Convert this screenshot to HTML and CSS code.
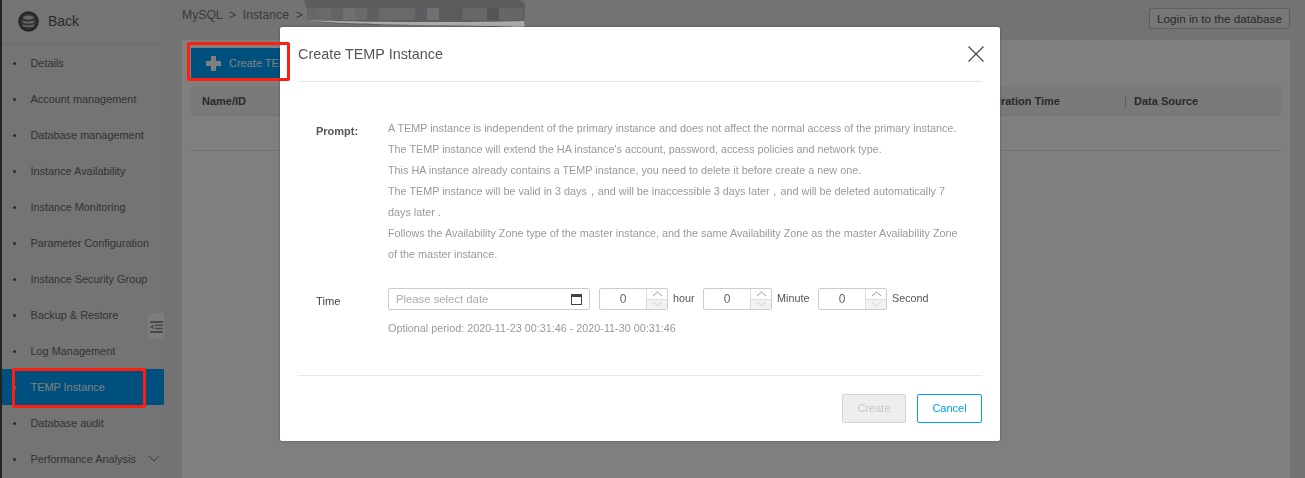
FILE: index.html
```html
<!DOCTYPE html>
<html lang="en">
<head>
<meta charset="utf-8">
<title>Create TEMP Instance</title>
<link rel="stylesheet" href="styles.css">
</head>
<body>
<div class="app">
  <aside class="sidebar">
    <div class="back">
      <svg class="back-icon" width="21" height="21" viewBox="0 0 21 21"><circle cx="10.500" cy="10.500" r="9.300" fill="#666" stroke="#4a4a4a" stroke-width="2"/><ellipse cx="10.500" cy="6.600" rx="5.500" ry="2" fill="#ccc"/><path d="M5 9.600c1 1.500 10 1.500 11 0v1.800c-1 1.500-10 1.500-11 0zM5 13.200c1 1.500 10 1.500 11 0V15c-1 1.500-10 1.500-11 0z" fill="#ccc"/></svg>
      <span>Back</span>
    </div>
    <ul class="menu">
      <li class="item">Details</li>
      <li class="item">Account management</li>
      <li class="item">Database management</li>
      <li class="item">Instance Availability</li>
      <li class="item">Instance Monitoring</li>
      <li class="item">Parameter Configuration</li>
      <li class="item">Instance Security Group</li>
      <li class="item">Backup &amp; Restore</li>
      <li class="item">Log Management</li>
      <li class="item active">TEMP Instance</li>
      <li class="item">Database audit</li>
      <li class="item">Performance Analysis
        <svg class="chev" width="12" height="7" viewBox="0 0 12 7"><path d="M1 1l5 5 5-5" fill="none" stroke="#777" stroke-width="1"/></svg>
      </li>
    </ul>
    <div class="collapse">
      <svg width="13" height="12" viewBox="0 0 13 12"><path d="M0 0h13v2H0zM5 3.500h8v1.500H5zM5 6.800h8v1.500H5zM0 10h13v2H0z M3.500 3.500v4.800L0 5.900z" fill="#909090"/></svg>
    </div>
  </aside>
  <main class="main">
    <header class="topbar">
      <div class="crumbs">MySQL &nbsp;&gt;&nbsp; Instance &nbsp;&gt;</div>
      <button class="login">Login in to the database</button>
    </header>
    <section class="panel">
      <button class="create-main">
        <svg width="15" height="15" viewBox="0 0 15 15"><path d="M5 0h5v5h5v5h-5v5H5v-5H0V5h5z" fill="#fff"/></svg>
        <span>Create TEMP Instance</span>
      </button>
      <div class="thead">
        <span class="th name">Name/ID</span>
        <span class="th exp">Expiration Time</span>
        <span class="th src">Data Source</span>
      </div>
      <div class="empty-row"></div>
    </section>
  </main>
</div>

<div class="overlay"></div>

<svg class="scribble" width="224" height="28" viewBox="0 0 224 28">
  <path d="M2 0h216c4 2 6 4 5 7l-1 14c2 2 1 5-3 6-30 1-60-2-90-2-40 0-90 1-115-4C10 18 4 8 2 0z" fill="#5d5d5d"/>
  <path d="M6 20c40 2 150 3 216 1l1 5c-4 2-6 1-10 1-30-2-170-1-207-7z" fill="#aaa"/>
  <g>
    <rect x="5" y="8" width="12" height="12" fill="#666"/><rect x="17" y="8" width="12" height="12" fill="#6a6a6a"/>
    <rect x="29" y="8" width="12" height="12" fill="#646464"/><rect x="41" y="8" width="12" height="12" fill="#6f7070"/>
    <rect x="53" y="8" width="12" height="12" fill="#6a6a6a"/><rect x="65" y="8" width="12" height="12" fill="#5f5f5f"/>
    <rect x="77" y="8" width="36" height="12" fill="#696969"/><rect x="113" y="8" width="12" height="12" fill="#5b5d60"/>
    <rect x="125" y="8" width="12" height="12" fill="#6f7170"/><rect x="137" y="8" width="24" height="12" fill="#5c5a5a"/>
    <rect x="161" y="8" width="24" height="12" fill="#686868"/><rect x="185" y="8" width="12" height="12" fill="#555"/>
    <rect x="197" y="8" width="24" height="12" fill="#666"/>
  </g>
</svg>

<div class="modal" role="dialog">
  <div class="modal-head">
    <h2 class="modal-title">Create TEMP Instance</h2>
    <svg class="close" width="16" height="16" viewBox="0 0 16 16"><path d="M0.500 0.500l15 15M15.500 0.500l-15 15" fill="none" stroke="#444" stroke-width="1.100"/></svg>
  </div>
  <div class="modal-body">
    <div class="prompt">
      <div class="prompt-label">Prompt:</div>
      <div class="prompt-text">
        <p>A TEMP instance is independent of the primary instance and does not affect the normal access of the primary instance.</p>
        <p>The TEMP instance will extend the HA instance's account, password, access policies and network type.</p>
        <p>This HA instance already contains a TEMP instance, you need to delete it before create a new one.</p>
        <p>The TEMP instance will be valid in 3 days，and will be inaccessible 3 days later，and will be deleted automatically 7 days later .</p>
        <p>Follows the Availability Zone type of the master instance, and the same Availability Zone as the master Availability Zone of the master instance.</p>
      </div>
    </div>
    <div class="time-row">
      <div class="time-label">Time</div>
      <div class="time-fields">
        <div class="date-input">
          <span>Please select date</span>
          <svg width="11" height="11" viewBox="0 0 11 11"><rect x="0.500" y="0.500" width="10" height="10" fill="none" stroke="#444"/><rect x="0" y="0" width="11" height="3" fill="#444"/></svg>
        </div>
        <div class="spin"><span class="spin-val">0</span><span class="spin-btns"><span class="up"><svg width="11" height="6" viewBox="0 0 11 6"><path d="M1 5l4.500-4 4.500 4" fill="none" stroke="#999"/></svg></span><span class="down"><svg width="11" height="6" viewBox="0 0 11 6"><path d="M1 1l4.500 4 4.500-4" fill="none" stroke="#ccc"/></svg></span></span></div>
        <span class="unit unit-hour">hour</span>
        <div class="spin"><span class="spin-val">0</span><span class="spin-btns"><span class="up"><svg width="11" height="6" viewBox="0 0 11 6"><path d="M1 5l4.500-4 4.500 4" fill="none" stroke="#999"/></svg></span><span class="down"><svg width="11" height="6" viewBox="0 0 11 6"><path d="M1 1l4.500 4 4.500-4" fill="none" stroke="#ccc"/></svg></span></span></div>
        <span class="unit unit-minute">Minute</span>
        <div class="spin"><span class="spin-val">0</span><span class="spin-btns"><span class="up"><svg width="11" height="6" viewBox="0 0 11 6"><path d="M1 5l4.500-4 4.500 4" fill="none" stroke="#999"/></svg></span><span class="down"><svg width="11" height="6" viewBox="0 0 11 6"><path d="M1 1l4.500 4 4.500-4" fill="none" stroke="#ccc"/></svg></span></span></div>
        <span class="unit">Second</span>
      </div>
    </div>
    <div class="period">Optional period: 2020-11-23 00:31:46 - 2020-11-30 00:31:46</div>
  </div>
  <div class="modal-foot">
    <button class="btn btn-disabled">Create</button>
    <button class="btn btn-cancel">Cancel</button>
  </div>
</div>

<div class="mark mark-create"></div>
<div class="mark mark-temp"></div>
</body>
</html>
```
FILE: styles.css
```css
* { box-sizing: border-box; }
html, body { margin: 0; padding: 0; height: 100%; overflow: hidden; }
body { font-family: "Liberation Sans", Arial, sans-serif; font-size: 12px; color: #333; background: #e6e6e6; }
p, h2, ul { margin: 0; padding: 0; }
button { font-family: inherit; cursor: pointer; }

.app { display: flex; width: 1305px; height: 478px; }
.sidebar { position: relative; width: 164px; flex: none; background: #e9e9e9; border-left: 2px solid #444; }
.back { height: 45px; display: flex; align-items: center; gap: 9px; padding: 0 0 2px 16px; font-size: 14px; color: #555; border-bottom: 1px solid #d8d8d8; }
.menu { list-style: none; }
.item { position: relative; height: 36px; line-height: 36px; padding-left: 28.500px; font-size: 10.900px; color: #666; }
.item::before { content: ""; position: absolute; left: 11px; top: 17px; width: 3px; height: 3px; border-radius: 50%; background: #555; }
.item.active { background: #00a0fa; color: #fff; }
.item.active::before { background: #fff; }
.chev { position: absolute; right: 4px; top: 14px; }
.collapse { position: absolute; right: 0; top: 313px; width: 16px; height: 27px; background: #fafafa; display: flex; align-items: center; justify-content: center; clip-path: polygon(0 6%, 100% 0, 100% 100%, 0 90%); }

.main { flex: 1; background: #e6e6e6; display: flex; flex-direction: column; padding: 0 15px 0 18px; }
.topbar { height: 40px; display: flex; justify-content: space-between; align-items: flex-start; flex: none; }
.crumbs { font-size: 12.200px; line-height: 31px; color: #777; }
.login { height: 21px; margin-top: 8px; width: 141px; padding: 0; font-size: 11.700px; color: #555; background: #eee; border: 1px solid #bcbcbc; border-radius: 1px; }
.panel { flex: 1; background: #fff; padding: 8px 9px 0; }
.create-main { height: 30px; width: 200px; display: flex; align-items: center; gap: 8px; padding: 0 0 0 15px; border: 0; background: #00a0fa; color: #fff; font-size: 11px; }
.thead { position: relative; margin-top: 9px; height: 29px; background: #f3f3f3; border-bottom: 1px solid #e6e6e6; font-weight: bold; font-size: 11px; display: flex; align-items: center; }
.th { color: #555; }
.name { padding-left: 11px; }
.exp { margin-left: auto; }
.src { width: 156px; margin-left: 65px; padding-left: 8px; border-left: 1px solid #bbb; line-height: 12px; }
.empty-row { height: 35px; border-bottom: 1px solid #e0e0e0; }

.overlay { position: fixed; inset: 0; background: rgba(0, 0, 0, .5); }
.scribble { position: absolute; left: 302px; top: 0; }

.modal { position: absolute; left: 280px; top: 27px; width: 720px; height: 414px; background: #fff; border-radius: 2px; padding: 0 18px; display: flex; flex-direction: column; box-shadow: 0 0 3px rgba(0,0,0,.3); }
.modal-head { height: 55px; flex: none; display: flex; align-items: center; justify-content: space-between; border-bottom: 1px solid #e8e8e8; }
.modal-title { font-size: 14.400px; font-weight: normal; color: #555; }
.close { margin-right: -2px; }
.modal-body { flex: 1; padding-top: 36px; }
.prompt { display: flex; }
.prompt-label { width: 90px; padding-left: 18px; font-weight: bold; font-size: 11px; color: #555; line-height: 27px; flex: none; }
.prompt-text { width: 573px; font-size: 10.800px; line-height: 21px; color: #999; }
.time-row { display: flex; margin-top: 23px; }
.time-label { width: 90px; padding-left: 18px; font-size: 11.200px; color: #444; line-height: 27px; flex: none; }
.time-fields { display: flex; align-items: center; height: 22px; }
.date-input { width: 202px; height: 22px; border: 1px solid #ccc; border-radius: 2px; display: flex; align-items: center; justify-content: space-between; padding: 0 7px; color: #aaa; font-size: 11.300px; margin-right: 9px; }
.spin { width: 69px; height: 22px; border: 1px solid #ccc; border-radius: 2px; display: flex; }
.spin-val { flex: 1; text-align: center; line-height: 21px; color: #666; font-size: 12px; }
.spin-btns { width: 21px; display: flex; flex-direction: column; border-left: 1px solid #ddd; }
.spin-btns span { flex: 1; display: flex; align-items: center; justify-content: center; }
.down { background: #f2f2f2; border-top: 1px solid #ddd; }
.unit { font-size: 10.800px; color: #555; margin: 0 0 3px 5px; }
.unit-hour { width: 30px; }
.unit-minute { width: 41px; }
.period { margin-top: 5px; padding-left: 90px; font-size: 10.800px; line-height: 16px; color: #999; }
.modal-foot { height: 66px; flex: none; border-top: 1px solid #e8e8e8; display: flex; justify-content: flex-end; align-items: flex-start; gap: 11px; padding-top: 18px; }
.btn { height: 29px; padding: 0 0 2px; font-size: 11px; border-radius: 2px; }
.btn-disabled { width: 64px; background: #eee; border: 1px solid #d4d4d4; color: #c8c8c8; }
.btn-cancel { width: 65px; background: #fff; border: 1px solid #00a0fa; color: #00a0fa; }

.mark { position: absolute; border: 3px solid #ff1e12; border-radius: 2px; }
.mark-create { left: 187px; top: 42px; width: 103px; height: 39px; }
.mark-temp { left: 12px; top: 368px; width: 134px; height: 40px; }
```
